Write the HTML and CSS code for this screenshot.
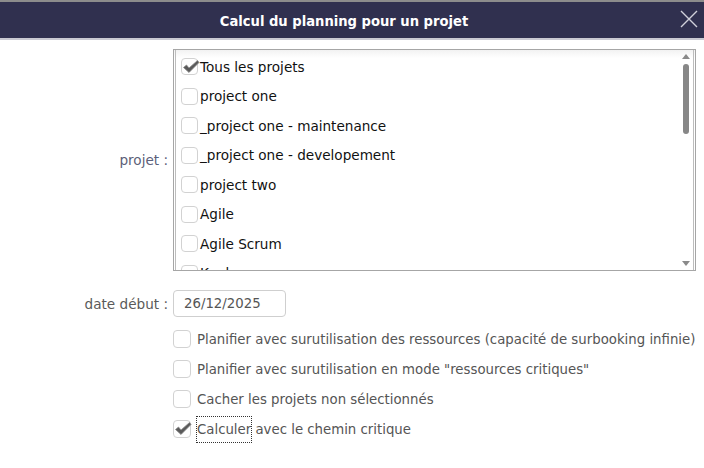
FILE: index.html
```html
<!DOCTYPE html>
<html lang="fr">
<head>
<meta charset="utf-8">
<title>Calcul du planning pour un projet</title>
<link rel="stylesheet" href="styles.css">
</head>
<body>
<div class="topstrip"></div>
<header class="titlebar">
  <h1 class="title">Calcul du planning pour un projet</h1>
  <button class="close" aria-label="Fermer">
    <svg width="18" height="18" viewBox="0 0 18 18"><path d="M1 1 L17 17 M17 1 L1 17" stroke="#d0d0da" stroke-width="1.4" fill="none"/></svg>
  </button>
</header>
<main class="form">
  <div class="row row-list">
    <label class="label">projet :</label>
    <div class="list">
      <div class="list-inner">
        <div class="item"><span class="cb checked"><svg class="tick" width="18" height="16" viewBox="0 0 18 16"><path d="M1.5 8.5 L4.5 6 L7 9 L15.5 1.5 L17 3.5 L7 13.5 Z" fill="#5a5a5a" stroke="#8a8a8a" stroke-width="0.8" stroke-linejoin="round"/></svg></span>Tous les projets</div>
        <div class="item"><span class="cb"></span>project one</div>
        <div class="item"><span class="cb"></span>_project one - maintenance</div>
        <div class="item"><span class="cb"></span>_project one - developement</div>
        <div class="item"><span class="cb"></span>project two</div>
        <div class="item"><span class="cb"></span>Agile</div>
        <div class="item"><span class="cb"></span>Agile Scrum</div>
        <div class="item"><span class="cb"></span>Kanban</div>
      </div>
      <div class="scrollbar">
        <span class="arrow up"></span>
        <span class="thumb"></span>
        <span class="arrow down"></span>
      </div>
    </div>
  </div>
  <div class="row row-date">
    <label class="label">date début :</label>
    <div class="date">26/12/2025</div>
  </div>
  <div class="options">
    <div class="opt"><span class="cb"></span>Planifier avec surutilisation des ressources (capacité de surbooking infinie)</div>
    <div class="opt"><span class="cb"></span>Planifier avec surutilisation en mode "ressources critiques"</div>
    <div class="opt"><span class="cb"></span>Cacher les projets non sélectionnés</div>
    <div class="opt"><span class="cb checked"><svg class="tick" width="18" height="16" viewBox="0 0 18 16"><path d="M1.5 8.5 L4.5 6 L7 9 L15.5 1.5 L17 3.5 L7 13.5 Z" fill="#5a5a5a" stroke="#8a8a8a" stroke-width="0.8" stroke-linejoin="round"/></svg></span><span class="focus">Calculer</span>&nbsp;avec le chemin critique</div>
  </div>
</main>
</body>
</html>
```

FILE: styles.css
```css
html, body {
  margin: 0;
  padding: 0;
  background: #ffffff;
  font-family: "DejaVu Sans", Verdana, sans-serif;
  font-size: 13px;
}

.topstrip {
  height: 2px;
  background: #8c8c8c;
}

.titlebar {
  height: 36px;
  background: #30304f;
  border-bottom: 2px solid #c9c9d2;
  display: flex;
  align-items: center;
  justify-content: center;
  padding-right: 16px;
  position: relative;
}

.title {
  margin: 0;
  color: #ffffff;
  font-family: "DejaVu Sans Condensed", "DejaVu Sans", sans-serif;
  font-weight: bold;
  font-size: 14.6px;
}

.close {
  position: absolute;
  right: 6px;
  top: 8px;
  background: none;
  border: 0;
  padding: 0;
  width: 18px;
  height: 18px;
  display: block;
}

.form {
  padding-top: 9px;
}

.row {
  display: grid;
  grid-template-columns: 168px auto;
  column-gap: 5px;
  align-items: center;
}

.label {
  text-align: right;
  color: #5c6078;
  font-size: 13.6px;
}

.row-date .label {
  color: #5a5a5a;
}

.list {
  position: relative;
  width: 521px;
  height: 220px;
  border: 1px solid #a6a6a6;
  overflow: hidden;
  background: linear-gradient(#f2f2f2, #ffffff 8px);
}

.list-inner {
  margin: 0 1px;
  height: 220px;
  border-left: 1px solid #bdbdbd;
  border-right: 1px solid #bdbdbd;
  padding-top: 2px;
  box-sizing: border-box;
}

.item {
  height: 29.5px;
  display: flex;
  align-items: center;
  padding-left: 5px;
  color: #111111;
  font-size: 13.6px;
}

.cb {
  position: relative;
  flex: none;
  width: 15px;
  height: 15px;
  border: 1px solid #d2d2d2;
  border-radius: 4px;
  background: #ffffff;
  margin-right: 2px;
}

.tick {
  position: absolute;
  left: 0;
  top: 0;
}

.scrollbar {
  position: absolute;
  right: 4px;
  top: 0;
  width: 10px;
  height: 220px;
}

.arrow {
  position: absolute;
  left: 1px;
  width: 0;
  height: 0;
  border-left: 4px solid transparent;
  border-right: 4px solid transparent;
}

.arrow.up {
  top: 4px;
  border-bottom: 5px solid #8a8a8a;
}

.arrow.down {
  bottom: 4px;
  border-top: 5px solid #8a8a8a;
}

.thumb {
  position: absolute;
  left: 2px;
  top: 14px;
  width: 6px;
  height: 70px;
  border-radius: 3px;
  background: #878787;
}

.row-date {
  margin-top: 19px;
}

.date {
  width: 101px;
  height: 25px;
  border: 1px solid #cfcfcf;
  border-radius: 4px;
  padding-left: 10px;
  line-height: 25px;
  color: #555555;
  font-size: 13.3px;
}

.options {
  margin-left: 173px;
  margin-top: 7px;
}

.opt {
  height: 30px;
  display: flex;
  align-items: center;
  color: #555555;
  font-size: 13.3px;
}

.opt .cb {
  width: 16px;
  height: 16px;
  margin-right: 6px;
}

.focus {
  outline: 1px dotted #333333;
  outline-offset: 0;
  padding: 5px 0;
}
```
